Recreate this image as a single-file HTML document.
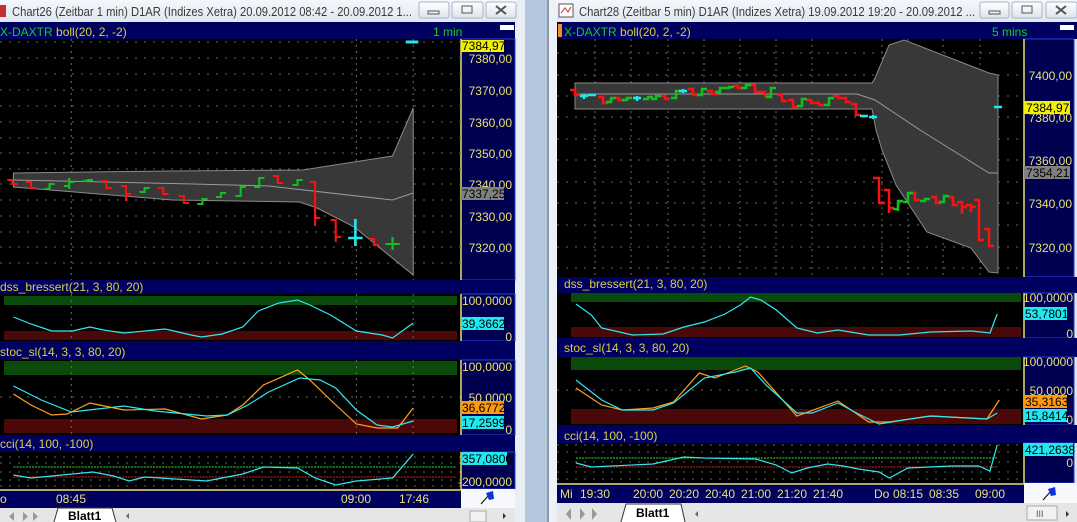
<!DOCTYPE html>
<html><head><meta charset="utf-8"><style>
html,body{margin:0;padding:0;background:#dfe6ef;}
svg{display:block;font-family:"Liberation Sans",sans-serif;}
</style></head><body>
<svg width="1077" height="522" viewBox="0 0 1077 522" xmlns="http://www.w3.org/2000/svg">
<defs>
<linearGradient id="tb" x1="0" y1="0" x2="0" y2="1"><stop offset="0" stop-color="#f4f7fb"/><stop offset="1" stop-color="#dfe7f1"/></linearGradient>
<linearGradient id="bt" x1="0" y1="0" x2="0" y2="1"><stop offset="0" stop-color="#ffffff"/><stop offset="1" stop-color="#dde4ee"/></linearGradient>
</defs>
<rect x="515" y="0" width="42" height="522" fill="#e9eef5"/>
<rect x="525" y="0" width="23" height="522" fill="#b4c6de"/>
<rect x="547" y="0" width="2" height="522" fill="#8899aa"/>
<rect x="549" y="0" width="8" height="522" fill="#eef2f8"/>

<!-- ============ LEFT WINDOW ============ -->
<rect x="0" y="0" width="517" height="22" fill="url(#tb)"/>
<rect x="0" y="5" width="6" height="12" fill="#c03030"/>
<text x="12" y="16" font-size="12.5" fill="#3a3a3a" textLength="400" lengthAdjust="spacingAndGlyphs">Chart26 (Zeitbar 1 min)  D1AR (Indizes Xetra) 20.09.2012 08:42 - 20.09.2012 1...</text>
<rect x="419" y="2" width="30" height="16" rx="2" fill="url(#bt)" stroke="#a8b4c4"/><rect x="428" y="11" width="11" height="3" fill="none" stroke="#555"/>
<rect x="452" y="2" width="31" height="16" rx="2" fill="url(#bt)" stroke="#a8b4c4"/><rect x="462" y="6" width="10" height="7" fill="none" stroke="#555"/>
<rect x="486" y="2" width="30" height="16" rx="2" fill="url(#bt)" stroke="#a8b4c4"/><path d="M496 6L506 14M506 6L496 14" stroke="#555" stroke-width="2"/>

<rect x="0" y="22" width="515" height="17" fill="#000060"/>
<text x="0" y="36" font-size="12"><tspan fill="#10d020">X-DAXTR </tspan><tspan fill="#d8d040">boll(20, 2, -2)</tspan></text>
<text x="433" y="36" font-size="12" fill="#10d020">1 min</text>
<rect x="500" y="25" width="14" height="5" fill="#fff"/>
<rect x="0" y="39" width="461" height="241" fill="#000"/>
<rect x="461" y="39" width="54" height="241" fill="#000050" stroke="#2040e0"/>
<line x1="461" y1="39" x2="461" y2="280" stroke="#e8e070" stroke-width="1.5"/>
<g stroke="#5a6a5a" stroke-dasharray="2,7">
<path d="M0 42H461M0 58H461M0 74H461M0 90H461M0 106H461M0 122H461M0 138H461M0 153H461M0 169H461M0 184H461M0 200H461M0 216H461M0 232H461M0 247H461M0 263H461"/>
</g>
<g transform="scale(1.033,1)">
<g stroke="#6a6a6a" stroke-dasharray="2,4"><path d="M69 39V508M345 39V508M400 39V508"/></g>
<polygon points="13,173 165,171 293,170 380,156 400,108 400,275 343,227 307,208 290,202 167,200 13,187" fill="#383838" stroke="#8a8a8a"/>
<polyline points="13,180 187,184 260,186 380,200 400,193" fill="none" stroke="#9a9a9a"/>
<g fill="none" stroke="#ff1010" stroke-width="2">
<path d="M7 180H12V184H17M25 182H30V188H35M98 181H103V188H108M117 186H122V194H127M122 194V201M153 188H158V194H163M173 196H178V203H183M264 176H269V183H274M300 182H305V218H310M305 218V226M320 220H325V237H330M325 237V242M357 239H362V245H367"/>
</g>
<g fill="none" stroke="#10c020" stroke-width="2">
<path d="M43 189H48V184H53M62 186H67V182H72M67 178V189M80 181H85V180H90M135 192H140V188H145M191 204H196V199H201M209 197H214V193H219M228 196H233V187H238M246 187H251V178H256M283 185H288V180H293M380 237V250M373 244H387"/>
</g>
<path d="M344 219V246M337 238H351" stroke="#20e8f0" stroke-width="2.5"/>
<path d="M393 42H405" stroke="#20e8f0" stroke-width="3"/>
</g>
<g font-size="12" fill="#e8e070" text-anchor="end">
<text x="512" y="63">7380,00</text><text x="512" y="95">7370,00</text><text x="512" y="127">7360,00</text><text x="512" y="158">7350,00</text><text x="512" y="221">7330,00</text><text x="512" y="252">7320,00</text><text x="512" y="189">7340,00</text>
</g>
<rect x="461" y="40" width="43" height="12" fill="#f0f000"/><text x="462" y="50" font-size="12" fill="#000">7384,97</text>
<rect x="461" y="187" width="43" height="13" fill="#808080"/><text x="462" y="198" font-size="12" fill="#000">7337,25</text>

<!-- dss -->
<rect x="0" y="280" width="515" height="14" fill="#000060"/>
<text x="0" y="291" font-size="12" fill="#d8d040">dss_bressert(21, 3, 80, 20)</text>
<rect x="0" y="294" width="461" height="47" fill="#000"/>
<rect x="4" y="296" width="453" height="9" fill="#0a4a0a"/>
<rect x="4" y="331" width="453" height="9" fill="#4a0808"/>
<rect x="461" y="294" width="54" height="47" fill="#000050" stroke="#2040e0"/>
<line x1="461" y1="294" x2="461" y2="341" stroke="#e8e070" stroke-width="1.5"/>
<g transform="scale(1.033,1)">
<path d="M69 294V341M345 294V341M400 294V341" stroke="#6a6a6a" stroke-dasharray="2,4"/>
<polyline points="13,317 30,324 50,331 70,331 87,327 100,330 120,333 150,330 160,329 185,335 195,337 215,334 235,327 250,311 270,303 288,300 300,305 320,315 345,331 370,335 380,338 400,323" fill="none" stroke="#30e8f0" stroke-width="1.2"/>
</g>
<text x="512" y="305" font-size="12" fill="#e8e070" text-anchor="end">100,0000</text>
<text x="512" y="341" font-size="12" fill="#e8e070" text-anchor="end">0</text>
<rect x="461" y="317" width="43" height="13" fill="#20e8f0"/><text x="462" y="328" font-size="12" fill="#000">39,3662</text>

<!-- stoc -->
<rect x="0" y="341" width="515" height="19" fill="#000060"/>
<text x="0" y="356" font-size="12" fill="#d8d040">stoc_sl(14, 3, 3, 80, 20)</text>
<rect x="0" y="360" width="461" height="75" fill="#000"/>
<rect x="4" y="361" width="453" height="14" fill="#0a4a0a"/>
<rect x="4" y="419" width="453" height="14" fill="#4a0808"/>
<path d="M0 397H461" stroke="#5a6a5a" stroke-dasharray="2,7"/>
<rect x="461" y="360" width="54" height="75" fill="#000050" stroke="#2040e0"/>
<line x1="461" y1="360" x2="461" y2="435" stroke="#e8e070" stroke-width="1.5"/>
<g transform="scale(1.033,1)">
<path d="M69 360V435M345 360V435M400 360V435" stroke="#6a6a6a" stroke-dasharray="2,4"/>
<polyline points="13,394 30,405 50,415 65,414 87,403 120,410 160,409 195,419 220,415 235,405 255,385 288,370 300,380 320,400 345,424 365,428 385,428 400,408" fill="none" stroke="#ffa020" stroke-width="1.2"/>
<polyline points="13,386 40,400 69,412 120,406 150,411 200,416 220,415 240,405 260,392 290,378 310,380 325,388 345,410 365,425 380,427 400,421" fill="none" stroke="#30e8f0" stroke-width="1.2"/>
</g>
<text x="512" y="371" font-size="12" fill="#e8e070" text-anchor="end">100,0000</text>
<text x="512" y="402" font-size="12" fill="#e8e070" text-anchor="end">50,0000</text>
<text x="512" y="434" font-size="12" fill="#e8e070" text-anchor="end">0</text>
<rect x="461" y="401" width="43" height="13" fill="#ff9a10"/><text x="462" y="412" font-size="12" fill="#000">36,6772</text>
<rect x="461" y="416" width="43" height="13" fill="#20e8f0"/><text x="462" y="427" font-size="12" fill="#000">17,2599</text>

<!-- cci -->
<rect x="0" y="435" width="515" height="17" fill="#000060"/>
<text x="0" y="448" font-size="12" fill="#d8d040">cci(14, 100, -100)</text>
<rect x="0" y="452" width="461" height="37" fill="#000"/>
<g stroke="#5a6a5a" stroke-dasharray="2,7"><path d="M0 457H461M0 463H461M0 472H461M0 480H461M0 486H461"/></g>
<rect x="461" y="452" width="54" height="37" fill="#000050" stroke="#2040e0"/>
<line x1="461" y1="452" x2="461" y2="489" stroke="#e8e070" stroke-width="1.5"/>
<g transform="scale(1.033,1)">
<path d="M13 467H442" stroke="#30e030" stroke-dasharray="2,1"/>
<path d="M13 477H442" stroke="#e02020" stroke-dasharray="2,1"/>
<polyline points="13,475 30,478 60,475 90,472 110,476 125,481 140,477 200,481 235,474 255,467 288,468 305,478 325,485 345,481 380,478 400,454" fill="none" stroke="#30e8f0" stroke-width="1.2"/>
</g>
<rect x="461" y="452" width="46" height="13" fill="#20e8f0"/><text x="462" y="463" font-size="12" fill="#000">357,0800</text>
<text x="512" y="486" font-size="12" fill="#e8e070" text-anchor="end">-200,0000</text>

<rect x="0" y="489" width="461" height="19" fill="#000060"/>
<line x1="0" y1="490" x2="461" y2="490" stroke="#e8e070" stroke-width="1.5"/>
<g font-size="12" fill="#e8e070"><text x="0" y="503">o</text><text x="56" y="503">08:45</text><text x="341" y="503">09:00</text><text x="399" y="503">17:46</text></g>
<rect x="461" y="489" width="54" height="19" fill="#f6f8fb"/>
<path d="M481 504L489 495" stroke="#000"/><path d="M486 493L493 491L494 499L489 500Z" fill="#1030e0"/>
<rect x="0" y="508" width="515" height="14" fill="#e6e6e6"/>
<g fill="#999"><path d="M4 512V521M14 512L9 516.5L14 521ZM23 512L28 516.5L23 521ZM39 512V521M33 512L38 516.5L33 521Z"/></g>
<path d="M54 522L58 508H112L116 522" fill="#fff" stroke="#333"/>
<text x="68" y="520" font-size="12" font-weight="bold" fill="#000">Blatt1</text>
<path d="M129 513L126 516L129 519Z" fill="#666"/>
<rect x="470" y="511" width="16" height="11" fill="#f2f2f2" stroke="#aaa"/>
<path d="M503 513L506 516L503 519Z" fill="#333"/>

<!-- ============ RIGHT WINDOW ============ -->
<rect x="557" y="0" width="520" height="22" fill="url(#tb)"/>
<rect x="559" y="4" width="14" height="13" fill="#fff" stroke="#555"/><path d="M561 13L565 8L568 12L571 7" stroke="#c03030" fill="none"/>
<text x="579" y="16" font-size="12.5" fill="#3a3a3a" textLength="396" lengthAdjust="spacingAndGlyphs">Chart28 (Zeitbar 5 min)  D1AR (Indizes Xetra) 19.09.2012 19:20 - 20.09.2012 ...</text>
<rect x="980" y="2" width="29" height="16" rx="2" fill="url(#bt)" stroke="#a8b4c4"/><rect x="989" y="11" width="11" height="3" fill="none" stroke="#555"/>
<rect x="1012" y="2" width="30" height="16" rx="2" fill="url(#bt)" stroke="#a8b4c4"/><rect x="1022" y="6" width="10" height="7" fill="none" stroke="#555"/>
<rect x="1046" y="2" width="31" height="16" rx="2" fill="url(#bt)" stroke="#a8b4c4"/><path d="M1056 6L1066 14M1066 6L1056 14" stroke="#555" stroke-width="2"/>

<rect x="557" y="22" width="520" height="17" fill="#000060"/>
<rect x="558" y="24" width="4" height="13" fill="#f09020"/>
<text x="564" y="36" font-size="12"><tspan fill="#10d020">X-DAXTR </tspan><tspan fill="#d8d040">boll(20, 2, -2)</tspan></text>
<text x="992" y="36" font-size="12" fill="#10d020">5 mins</text>
<rect x="1060" y="25" width="14" height="5" fill="#fff"/>
<rect x="557" y="39" width="467" height="238" fill="#000"/>
<rect x="1024" y="39" width="50" height="238" fill="#000050" stroke="#2040e0"/>
<line x1="1024" y1="39" x2="1024" y2="277" stroke="#e8e070" stroke-width="1.5"/>
<g stroke="#5a6a5a" stroke-dasharray="2,7">
<path d="M557 53H1024M557 75H1024M557 96H1024M557 117H1024M557 139H1024M557 160H1024M557 182H1024M557 203H1024M557 225H1024M557 247H1024M557 268H1024"/>
</g>
<g stroke="#6a6a6a" stroke-dasharray="2,4"><path d="M595 39V483M631 39V483M668 39V483M704 39V483M740 39V483M776 39V483M812 39V483M882 39V483M908 39V483M943 39V483M980 39V483"/></g>
<polygon points="575,83 872,83 875,78 889,45 904,40 989,73 998,75 998,273 989,272 971,248 927,232 896,185 882,150 876,130 872,109 575,109" fill="#383838" stroke="#8a8a8a"/>
<polyline points="575,94 857,94 875,100 920,130 989,173 998,173" fill="none" stroke="#9a9a9a"/>
<g fill="none" stroke="#ff1010" stroke-width="2.5">
<path d="M570 90H575V95H580M598 97H603V103H608M614 98H619V100H624M660 96H665V99H670M688 89H693V95H698M707 91H712V94H717M733 86H738V88H743M750 85H755V92H760M760 92H765V96H770M777 95H782V101H787M788 100H793V107H798M806 100H811V103H816M814 103H819V105H824M833 96H838V98H843M841 98H846V102H851M851 104H856V115H861M873 178H879V203H885M884 190H889V208H894M889 208V213M910 193H915V200H920M931 197H936V203H941M948 197H953V205H958M957 202H962V207H967M962 207V214M966 205H971V207H976M971 207V212M974 200H979V240H984M984 229H989V246H994"/>
</g>
<g fill="none" stroke="#10c020" stroke-width="2.5">
<path d="M606 102H611V98H616M622 100H627V98H632M643 99H648V97H653M651 99H656V96H661M671 98H676V91H681M697 95H702V89H707M715 92H720V88H725M724 88H729V87H734M741 88H746V85H751M766 97H771V88H776M797 106H802V99H807M824 105H829V98H834M893 209H898V201H903M898 201V211M903 202H908V193H913M920 201H925V199H930M939 202H944V196H949"/>
</g>
<g fill="none" stroke="#20e8f0" stroke-width="2.5">
<path d="M580 96H588M584 94V99M588 95H596M633 98H641M637 96V101M679 91H687M683 89V93M860 116H868M869 117H877M873 115V119M994 107H1002"/>
</g>
<g font-size="12" fill="#e8e070" text-anchor="end">
<text x="1072" y="80">7400,00</text><text x="1072" y="122">7380,00</text><text x="1072" y="165">7360,00</text><text x="1072" y="208">7340,00</text><text x="1072" y="252">7320,00</text>
</g>
<rect x="1024" y="101" width="46" height="13" fill="#f0f000"/><text x="1026" y="112" font-size="12" fill="#000">7384,97</text>
<rect x="1024" y="166" width="46" height="13" fill="#808080"/><text x="1026" y="177" font-size="12" fill="#000">7354,21</text>

<!-- right dss -->
<rect x="557" y="277" width="520" height="16" fill="#000060"/>
<text x="564" y="288" font-size="12" fill="#d8d040">dss_bressert(21, 3, 80, 20)</text>
<rect x="557" y="293" width="467" height="45" fill="#000"/>
<rect x="571" y="293" width="450" height="9" fill="#0a4a0a"/>
<rect x="571" y="327" width="450" height="10" fill="#4a0808"/>
<rect x="1024" y="293" width="50" height="45" fill="#000050" stroke="#2040e0"/>
<line x1="1024" y1="293" x2="1024" y2="338" stroke="#e8e070" stroke-width="1.5"/>
<g transform="translate(540,0) scale(1.0274,1) translate(-540,0)">
<polyline points="575,304 590,315 600,328 630,335 660,334 680,327 700,322 720,314 735,305 745,297 755,300 770,310 790,328 810,333 830,330 860,335 890,335 920,332 960,331 978,333 985,314" fill="none" stroke="#30e8f0" stroke-width="1.2"/>
</g>
<text x="1073" y="302" font-size="12" fill="#e8e070" text-anchor="end">100,0000</text>
<text x="1073" y="338" font-size="12" fill="#e8e070" text-anchor="end">0</text>
<rect x="1024" y="307" width="43" height="13" fill="#20e8f0"/><text x="1025" y="318" font-size="12" fill="#000">53,7801</text>

<!-- right stoc -->
<rect x="557" y="338" width="520" height="19" fill="#000060"/>
<text x="564" y="352" font-size="12" fill="#d8d040">stoc_sl(14, 3, 3, 80, 20)</text>
<rect x="557" y="357" width="467" height="68" fill="#000"/>
<rect x="571" y="357" width="450" height="13" fill="#0a4a0a"/>
<rect x="571" y="409" width="450" height="15" fill="#4a0808"/>
<path d="M557 390H1024" stroke="#5a6a5a" stroke-dasharray="2,7"/>
<rect x="1024" y="357" width="50" height="68" fill="#000050" stroke="#2040e0"/>
<line x1="1024" y1="357" x2="1024" y2="425" stroke="#e8e070" stroke-width="1.5"/>
<g transform="translate(540,0) scale(1.0274,1) translate(-540,0)">
<polyline points="575,388 600,405 620,410 650,408 670,402 695,373 710,378 730,370 740,366 752,372 790,416 830,401 860,422 880,422 920,416 975,419 987,400" fill="none" stroke="#ffa020" stroke-width="1.2"/>
<polyline points="575,380 600,400 620,410 650,410 670,403 700,378 730,372 745,368 760,385 790,413 805,413 830,403 850,414 870,424 900,419 920,416 975,419 985,413" fill="none" stroke="#30e8f0" stroke-width="1.2"/>
</g>
<text x="1073" y="366" font-size="12" fill="#e8e070" text-anchor="end">100,0000</text>
<text x="1073" y="395" font-size="12" fill="#e8e070" text-anchor="end">50,0000</text>
<text x="1073" y="424" font-size="12" fill="#e8e070" text-anchor="end">0</text>
<rect x="1024" y="395" width="43" height="13" fill="#ff9a10"/><text x="1025" y="406" font-size="12" fill="#000">35,3163</text>
<rect x="1024" y="409" width="43" height="13" fill="#20e8f0"/><text x="1025" y="420" font-size="12" fill="#000">15,8414</text>

<!-- right cci -->
<rect x="557" y="425" width="520" height="18" fill="#000060"/>
<text x="564" y="440" font-size="12" fill="#d8d040">cci(14, 100, -100)</text>
<rect x="557" y="443" width="467" height="40" fill="#000"/>
<g stroke="#5a6a5a" stroke-dasharray="2,7"><path d="M557 445H1024M557 452H1024M557 462H1024M557 472H1024M557 479H1024"/></g>
<rect x="1024" y="443" width="50" height="40" fill="#000050" stroke="#2040e0"/>
<line x1="1024" y1="443" x2="1024" y2="483" stroke="#e8e070" stroke-width="1.5"/>
<g transform="translate(540,0) scale(1.0274,1) translate(-540,0)">
<path d="M575 458H985" stroke="#30e030" stroke-dasharray="2,1"/>
<path d="M575 467H985" stroke="#e02020" stroke-dasharray="2,1"/>
<polyline points="575,463 590,467 650,464 680,457 700,458 750,459 770,465 785,473 800,468 820,464 835,466 850,469 870,472 880,478 898,468 940,466 967,466 978,471 985,445" fill="none" stroke="#30e8f0" stroke-width="1.2"/>
</g>
<rect x="1024" y="443" width="49" height="13" fill="#20e8f0"/><text x="1025" y="454" font-size="12" fill="#000">421,2638</text>
<text x="1073" y="467" font-size="12" fill="#e8e070" text-anchor="end">0</text>

<rect x="557" y="483" width="467" height="20" fill="#000060"/>
<line x1="557" y1="484" x2="1024" y2="484" stroke="#e8e070" stroke-width="1.5"/>
<g font-size="12" fill="#e8e070"><text x="560" y="498">Mi</text><text x="580" y="498">19:30</text><text x="633" y="498">20:00</text><text x="669" y="498">20:20</text><text x="705" y="498">20:40</text><text x="741" y="498">21:00</text><text x="777" y="498">21:20</text><text x="813" y="498">21:40</text><text x="874" y="498">Do</text><text x="893" y="498">08:15</text><text x="929" y="498">08:35</text><text x="975" y="498">09:00</text></g>
<rect x="1024" y="483" width="53" height="20" fill="#f6f8fb"/>
<path d="M1043 500L1051 491" stroke="#000"/><path d="M1048 489L1055 487L1056 495L1051 496Z" fill="#1030e0"/>
<rect x="557" y="503" width="520" height="19" fill="#e6e6e6"/>
<g fill="#999"><path d="M561 508V520M571 508L566 514L571 520ZM580 508L585 514L580 520ZM599 508V520M592 508L597 514L592 520Z"/></g>
<path d="M621 522L626 504H681L685 522" fill="#fff" stroke="#333"/>
<text x="636" y="517" font-size="12" font-weight="bold" fill="#000">Blatt1</text>
<path d="M698 511L695 514L698 517Z" fill="#666"/>
<rect x="1027" y="506" width="30" height="14" fill="#f2f2f2" stroke="#aaa"/>
<text x="1036" y="517" font-size="9" fill="#555">III</text>
<path d="M1066 511L1069 514L1066 517Z" fill="#333"/>
</svg>
</body></html>
